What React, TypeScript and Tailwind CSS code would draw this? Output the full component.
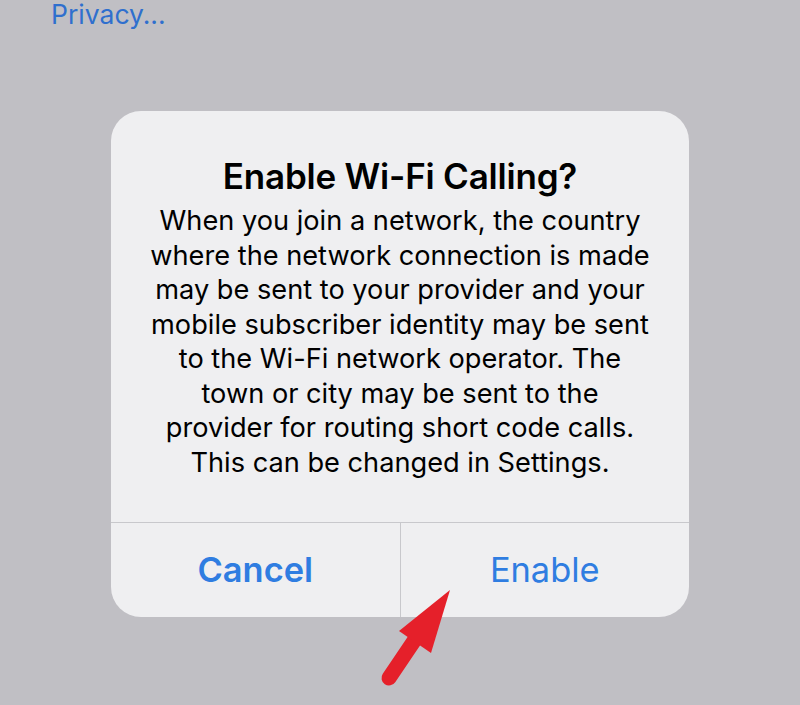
import React from 'react';

const font = { fontFamily: 'Inter, "Noto Sans", sans-serif' };

export default function App() {
  return (
    <div className="relative w-[800px] h-[705px] overflow-hidden bg-[#c0bfc4]" style={font}>
      <div className="absolute left-[51px] top-[0px] text-[26.5px] leading-[28px] text-[#2f6fce]">Privacy...</div>

      <div className="flex justify-center pt-[111px]">
        <div className="w-[578px] h-[506px] rounded-[30px] bg-[#efeff1] flex flex-col">
          <div className="flex-1 flex flex-col items-center pt-[45px]">
            <h1 className="text-[35px] leading-[40px] font-semibold text-black tracking-[-0.2px]">Enable Wi-Fi Calling?</h1>
            <p className="mt-[8px] text-center text-[27.2px] leading-[34.5px] text-black">
              When you join a network, the country<br />
              where the network connection is made<br />
              may be sent to your provider and your<br />
              mobile subscriber identity may be sent<br />
              to the Wi-Fi network operator. The<br />
              town or city may be sent to the<br />
              provider for routing short code calls.<br />
              This can be changed in Settings.
            </p>
          </div>
          <div className="h-[95px] border-t border-[#c8c8cc] flex">
            <button className="flex-1 flex items-center justify-center text-[34.4px] font-semibold text-[#2f7de1] border-r border-[#c8c8cc]">Cancel</button>
            <button className="flex-1 flex items-center justify-center text-[34.4px] text-[#2f7de1]">Enable</button>
          </div>
        </div>
      </div>

      <svg className="absolute left-0 top-0" width="800" height="705" viewBox="0 0 800 705">
        <line x1="389" y1="678" x2="416" y2="638" stroke="#e5202a" strokeWidth="15" strokeLinecap="round" />
        <polygon points="450,590 399,631 431,653" fill="#e5202a" />
      </svg>
    </div>
  );
}
